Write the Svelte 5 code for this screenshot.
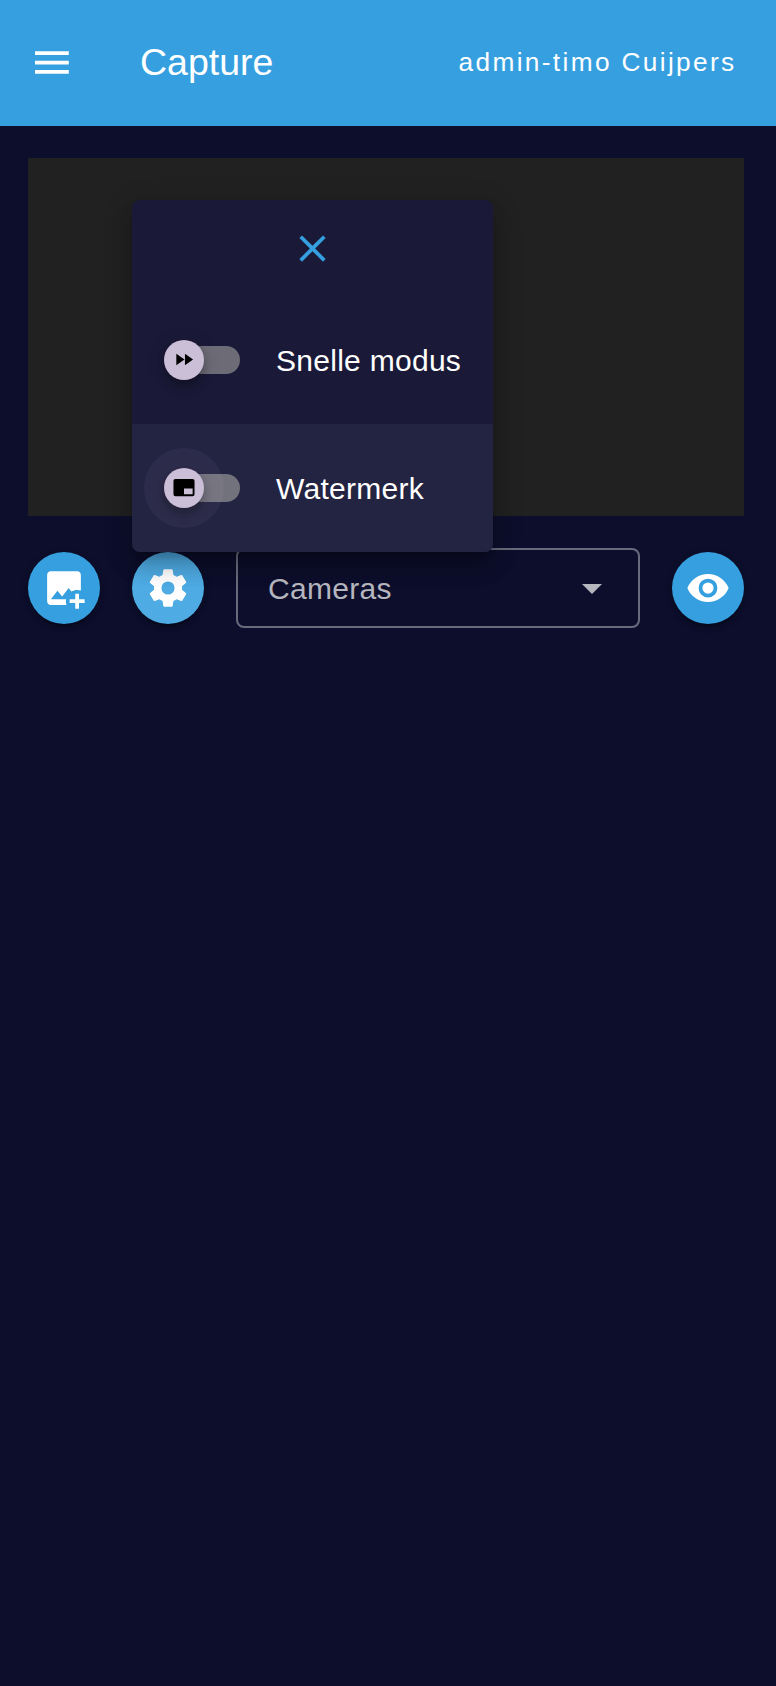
<script>
  const icons = {
    menu: 'M3,6H21V8H3V6M3,11H21V13H3V11M3,16H21V18H3V16Z',
    close: 'M19,6.41L17.59,5L12,10.59L6.41,5L5,6.41L10.59,12L5,17.59L6.41,19L12,13.41L17.59,19L19,17.59L13.41,12L19,6.41Z',
    forward: 'M13,6V18L21.5,12M4,18L12.5,12L4,6V18Z',
    watermark: 'M21,3H3A2,2 0 0,0 1,5V19A2,2 0 0,0 3,21H21A2,2 0 0,0 23,19V5A2,2 0 0,0 21,3M21,19H12V13H21V19Z',
    imagePlus: 'M18 15V18H15V20H18V23H20V20H23V18H20V15H18M13.3 21H5C3.9 21 3 20.1 3 19V5C3 3.9 3.9 3 5 3H19C20.1 3 21 3.9 21 5V13.3C20.4 13.1 19.7 13 19 13C17.9 13 16.8 13.3 15.9 13.9L14.5 12L11 16.5L8.5 13.5L5 18H13.1C13 18.3 13 18.7 13 19C13 19.7 13.1 20.4 13.3 21Z',
    cog: 'M12,15.5A3.5,3.5 0 0,1 8.5,12A3.5,3.5 0 0,1 12,8.5A3.5,3.5 0 0,1 15.5,12A3.5,3.5 0 0,1 12,15.5M19.43,12.97C19.47,12.65 19.5,12.33 19.5,12C19.5,11.67 19.47,11.34 19.43,11L21.54,9.37C21.73,9.22 21.78,8.95 21.66,8.73L19.66,5.27C19.54,5.05 19.27,4.96 19.05,5.05L16.56,6.05C16.04,5.66 15.5,5.32 14.87,5.07L14.5,2.42C14.46,2.18 14.25,2 14,2H10C9.75,2 9.54,2.18 9.5,2.42L9.13,5.07C8.5,5.32 7.96,5.66 7.44,6.05L4.95,5.05C4.73,4.96 4.46,5.05 4.34,5.27L2.34,8.73C2.21,8.95 2.27,9.22 2.46,9.37L4.57,11C4.53,11.34 4.5,11.67 4.5,12C4.5,12.33 4.53,12.65 4.57,12.97L2.46,14.63C2.27,14.78 2.21,15.05 2.34,15.27L4.34,18.73C4.46,18.95 4.73,19.03 4.95,18.95L7.44,17.94C7.96,18.34 8.5,18.68 9.13,18.93L9.5,21.58C9.54,21.82 9.75,22 10,22H14C14.25,22 14.46,21.82 14.5,21.58L14.87,18.93C15.5,18.67 16.04,18.34 16.56,17.94L19.05,18.95C19.27,19.03 19.54,18.95 19.66,18.73L21.66,15.27C21.78,15.05 21.73,14.78 21.54,14.63L19.43,12.97Z',
    eye: 'M12,9A3,3 0 0,0 9,12A3,3 0 0,0 12,15A3,3 0 0,0 15,12A3,3 0 0,0 12,9M12,17A5,5 0 0,1 7,12A5,5 0 0,1 12,7A5,5 0 0,1 17,12A5,5 0 0,1 12,17M12,4.5C7,4.5 2.73,7.61 1,12C2.73,16.39 7,19.5 12,19.5C17,19.5 21.27,16.39 23,12C21.27,7.61 17,4.5 12,4.5Z'
  };
  const options = [
    { label: 'Snelle modus', icon: 'forward', active: false },
    { label: 'Watermerk', icon: 'watermark', active: true }
  ];
</script>

{#snippet icon(name)}
  <svg class="icon" viewBox="0 0 24 24" aria-hidden="true"><path d={icons[name]} /></svg>
{/snippet}

<div class="app">
  <header>
    <button class="nav">{@render icon('menu')}</button>
    <h1>Capture</h1>
    <span class="user">admin-timo Cuijpers</span>
  </header>

  <main>
    <div class="video"></div>
    <div class="controls">
      <button class="fab">{@render icon('imagePlus')}</button>
      <button class="fab focused">{@render icon('cog')}</button>
      <div class="select">
        <span class="label">Cameras</span>
        <svg class="arrow" viewBox="0 0 20 10" aria-hidden="true"><path d="M0 0L10 10L20 0Z" /></svg>
      </div>
      <button class="fab">{@render icon('eye')}</button>
    </div>

    <div class="menu">
      <button class="close">{@render icon('close')}</button>
      {#each options as option}
        <div class="option" class:active={option.active}>
          <div class="switch">
            <div class="track"></div>
            <div class="thumb">{@render icon(option.icon)}</div>
          </div>
          <span class="label">{option.label}</span>
        </div>
      {/each}
    </div>
  </main>
</div>

<style>
  :global(body) {
    background: #0d0e2b;
  }
  .app {
    min-height: 1686px;
    background: #0d0e2b;
    color: #fff;
    font: 30px/48px 'Liberation Sans', Arial, sans-serif;
    letter-spacing: 0.009375em;
  }
  button {
    border: 0;
    padding: 0;
    margin: 0;
    background: none;
    color: inherit;
  }
  .icon {
    display: block;
    width: 45px;
    height: 45px;
    fill: currentColor;
  }
  header {
    display: flex;
    align-items: center;
    box-sizing: border-box;
    height: 126px;
    padding: 0 39.5px 2px 29px;
    background: #369fdf;
  }
  .nav .icon {
    transform: translateX(0.4px);
  }
  h1 {
    flex: 1;
    margin: 0 0 0 66px;
    font-size: 37.5px;
    font-weight: 400;
    letter-spacing: 0;
    line-height: 56px;
  }
  .user {
    font-size: 26.25px;
    letter-spacing: 0.0892857em;
  }
  main {
    position: relative;
    padding: 32px 32px 0 28px;
  }
  .video {
    height: 358px;
    background: #212121;
  }
  .controls {
    display: flex;
    align-items: center;
    gap: 32px;
    margin-top: 32px;
  }
  .fab {
    display: flex;
    flex: none;
    align-items: center;
    justify-content: center;
    width: 72px;
    height: 72px;
    border-radius: 50%;
    background: #369fdf;
    box-shadow: 0 6px 2px -4px rgba(0, 0, 0, 0.2), 0 4px 4px rgba(0, 0, 0, 0.14), 0 2px 10px rgba(0, 0, 0, 0.12);
  }
  .fab .icon {
    margin: 0 1px 1px 0;
    transform: translate(0.5px, 0.5px);
  }
  .focused {
    background: #4eabe3;
  }
  .select {
    display: flex;
    flex: 1;
    align-items: center;
    justify-content: space-between;
    box-sizing: border-box;
    height: 80px;
    padding: 0 36px 0 30px;
    border: 2px solid #696a7d;
    border-radius: 8px;
    color: #b6b6bf;
  }
  .label {
    padding-top: 2px;
  }
  .arrow {
    width: 20px;
    height: 10px;
    margin-top: 2px;
    fill: currentColor;
  }
  .menu {
    position: absolute;
    top: 74px;
    left: 132px;
    width: 361px;
    overflow: hidden;
    border-radius: 8px;
    background: #1a1a38;
    box-shadow: 0 10px 10px -6px rgba(0, 0, 0, 0.2), 0 16px 20px 2px rgba(0, 0, 0, 0.14), 0 6px 28px 4px rgba(0, 0, 0, 0.12);
  }
  .close {
    display: flex;
    align-items: center;
    justify-content: center;
    width: 100%;
    height: 96px;
    color: #369fdf;
  }
  .option {
    display: flex;
    align-items: center;
    gap: 36px;
    height: 128px;
    padding-left: 32px;
  }
  .active {
    background: #232342;
  }
  .switch {
    position: relative;
    display: flex;
    align-items: center;
    width: 76px;
    height: 40px;
  }
  .track {
    width: 72px;
    height: 28px;
    margin-left: 4px;
    border-radius: 14px;
    background: #6c6b76;
  }
  .active .track {
    background: #72727c;
  }
  .thumb {
    position: absolute;
    top: 0;
    left: 0;
    display: flex;
    align-items: center;
    justify-content: center;
    width: 40px;
    height: 40px;
    border-radius: 50%;
    background: #cbbfd7;
    color: #000;
    box-shadow: 0 4px 8px -2px rgba(0, 0, 0, 0.2), 0 8px 10px rgba(0, 0, 0, 0.14), 0 2px 20px rgba(0, 0, 0, 0.12);
  }
  .active .thumb::before {
    content: '';
    position: absolute;
    inset: -20px;
    border-radius: 50%;
    background: rgba(203, 191, 215, 0.06);
  }
  .thumb .icon {
    position: relative;
    width: 23px;
    height: 23px;
    margin: 0 1px 1px 0;
    transform: translateX(0.5px);
  }
</style>
